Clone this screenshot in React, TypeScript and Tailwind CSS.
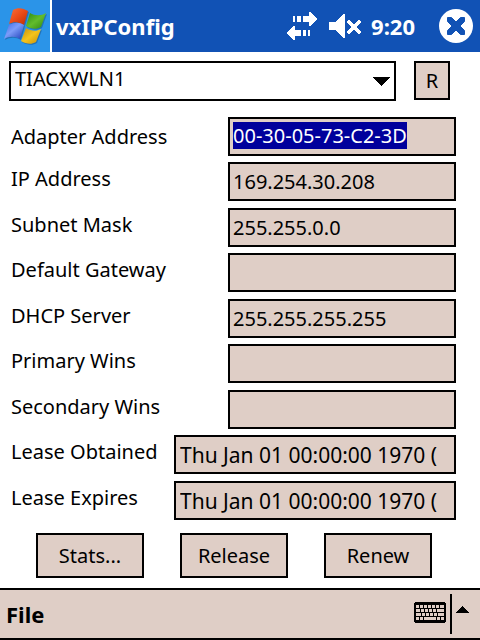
import { useEffect, useRef } from 'react';

interface Field {
  id: string;
  label: string;
  value: string;
  wide?: boolean;
}

const FIELDS: Field[] = [
  { id: 'adapter', label: 'Adapter Address', value: '00-30-05-73-C2-3D' },
  { id: 'ip', label: 'IP Address', value: '169.254.30.208' },
  { id: 'mask', label: 'Subnet Mask', value: '255.255.0.0' },
  { id: 'gateway', label: 'Default Gateway', value: '' },
  { id: 'dhcp', label: 'DHCP Server', value: '255.255.255.255' },
  { id: 'wins1', label: 'Primary Wins', value: '' },
  { id: 'wins2', label: 'Secondary Wins', value: '' },
  {
    id: 'obtained',
    label: 'Lease Obtained',
    value: 'Thu Jan 01 00:00:00 1970 (',
    wide: true,
  },
  {
    id: 'expires',
    label: 'Lease Expires',
    value: 'Thu Jan 01 00:00:00 1970 (',
    wide: true,
  },
];

// [x, y, width] of every key, all are 3px high
const KEYS = [
  [2, 3, 3], [6, 3, 3], [10, 3, 3], [14, 3, 3], [18, 3, 3], [22, 3, 3], [26, 3, 4],
  [2, 7, 4], [7, 7, 3], [11, 7, 3], [15, 7, 3], [19, 7, 3], [23, 7, 7],
  [2, 11, 5], [8, 11, 3], [12, 11, 3], [16, 11, 3], [20, 11, 3], [24, 11, 6],
  [2, 15, 3], [6, 15, 3], [10, 15, 12], [23, 15, 3], [27, 15, 3],
];

function StartLogo() {
  return (
    <svg width="50" height="52" viewBox="0 0 50 52">
      <defs>
        <linearGradient id="red" x1="0" y1="0" x2="1" y2="1">
          <stop offset="0" stopColor="#f8703c" />
          <stop offset="0.5" stopColor="#ea4a16" />
          <stop offset="1" stopColor="#b82c08" />
        </linearGradient>
        <linearGradient id="green" x1="0" y1="0" x2="1" y2="1">
          <stop offset="0" stopColor="#2c8a14" />
          <stop offset="0.5" stopColor="#62bc2c" />
          <stop offset="1" stopColor="#2c8410" />
        </linearGradient>
        <linearGradient id="blue" x1="0" y1="0" x2="1" y2="1">
          <stop offset="0" stopColor="#3e66e4" />
          <stop offset="0.45" stopColor="#7c9cf8" />
          <stop offset="1" stopColor="#1c3cb8" />
        </linearGradient>
        <linearGradient id="yellow" x1="0" y1="0" x2="1" y2="1">
          <stop offset="0" stopColor="#c08c10" />
          <stop offset="0.5" stopColor="#f4c41c" />
          <stop offset="1" stopColor="#c48c08" />
        </linearGradient>
      </defs>
      <g fill="#1c5c98" opacity="0.6" transform="translate(1 1)">
        <path d="M13 10C18 7 23 8 28 11L24 25C19 22 14 21 9 24Z" />
        <path d="M30 13C35 16 41 16 46 13L41 27C36 30 31 29 26 26Z" />
        <path d="M9 25C14 22 19 22 24 25L20 39C15 36 9 36 4 39Z" />
        <path d="M26 28C31 31 36 32 41 29L36 42C31 45 26 44 21 41Z" />
      </g>
      <path fill="url(#red)" d="M13 10C18 7 23 8 28 11L24 25C19 22 14 21 9 24Z" />
      <path fill="url(#green)" d="M30 13C35 16 41 16 46 13L41 27C36 30 31 29 26 26Z" />
      <path fill="url(#blue)" d="M9 25C14 22 19 22 24 25L20 39C15 36 9 36 4 39Z" />
      <path fill="url(#yellow)" d="M26 28C31 31 36 32 41 29L36 42C31 45 26 44 21 41Z" />
    </svg>
  );
}

function ConnectionIcon() {
  return (
    <svg width="30" height="28" viewBox="0 0 30 28" fill="#fff" shapeRendering="crispEdges">
      <path d="M6 4h2v6H6zM10 4h4v6h-4zM16 4h6V0h2l6 7-6 7h-2v-4h-6z" />
      <path d="M8 14H6l-6 7 6 7h2v-4h6v-6H8zM16 18h3v6h-3zM21 18h2v6h-2z" />
    </svg>
  );
}

function MutedIcon() {
  return (
    <svg width="32" height="24" viewBox="0 0 32 24" fill="#fff" shapeRendering="crispEdges">
      <path d="M0 8h7L14 0h2v24h-2L7 16H0z" />
      <path d="M20 8l10 10M30 8L20 18" stroke="#fff" strokeWidth="4" strokeLinecap="round" />
    </svg>
  );
}

function CloseIcon() {
  return (
    <svg width="34" height="34" viewBox="0 0 34 34">
      <circle cx="17" cy="17" r="17" fill="#fff" />
      <path
        d="M8.500 8.500h4l4.500 4.500 4.500-4.500h4v4l-4.500 4.500 4.500 4.500v4h-4l-4.500-4.500-4.500 4.500h-4v-4l4.500-4.500-4.500-4.500z"
        fill="#1152b5"
        stroke="#1152b5"
      />
    </svg>
  );
}

function KeyboardIcon() {
  return (
    <svg width="32" height="21" viewBox="0 0 32 21" shapeRendering="crispEdges">
      <path d="M1 0h30v1h1v19h-1v1H1v-1H0V1h1z" />
      {KEYS.map(([x, y, w]) => (
        <rect key={`${x}-${y}`} x={x} y={y} width={w} height="3" fill="#dfcec6" />
      ))}
    </svg>
  );
}

export default function App() {
  const firstField = useRef<HTMLInputElement>(null);

  useEffect(() => {
    firstField.current?.focus();
    firstField.current?.select();
  }, []);

  return (
    <div className="flex min-h-screen flex-col bg-white font-['Noto_Sans',sans-serif] text-xl text-black">
      <header className="flex h-[52px] items-center bg-[#1152b5] text-[22px] text-white">
        <button
          aria-label="Start"
          className="h-full shrink-0 border-r-2 border-white bg-[#2b94e8]"
        >
          <StartLogo />
        </button>
        <h1 className="flex-1 pl-1 font-bold">vxIPConfig</h1>
        <div className="flex items-center">
          <button aria-label="Connection" className="mr-3">
            <ConnectionIcon />
          </button>
          <button aria-label="Volume" className="mr-2.5">
            <MutedIcon />
          </button>
          <time className="mr-6 font-bold">9:20</time>
          <button aria-label="Close" className="mr-[7px]">
            <CloseIcon />
          </button>
        </div>
      </header>

      <main className="flex-1 pt-[9px]">
        <div className="flex gap-[18px] pr-[30px] pl-[9px]">
          <div className="relative flex-1">
            <select
              aria-label="Adapter"
              className="block h-10 w-full appearance-none border-2 border-black bg-white pb-1 pl-1 outline-none"
            >
              <option>TIACXWLN1</option>
            </select>
            <svg
              width="17"
              height="9"
              viewBox="0 0 17 9"
              shapeRendering="crispEdges"
              className="pointer-events-none absolute top-4 right-1.5"
            >
              <path d="M0 0h17L9 9H8z" />
            </svg>
          </div>
          <button className="h-[39px] w-9 border-2 border-black bg-[#dfcec6]">R</button>
        </div>

        <div className="mt-4 pr-6 pl-[11px]">
          {FIELDS.map(({ id, label, value, wide }, i) => (
            <div
              key={id}
              className="flex h-[39px] items-center justify-between odd:mb-1.5 even:mb-[7px]"
            >
              <label htmlFor={id} className={i === 0 ? '' : 'pb-1.5'}>
                {label}
              </label>
              <input
                id={id}
                ref={i === 0 ? firstField : undefined}
                readOnly
                defaultValue={value}
                className={`h-full rounded-none border-2 border-black bg-[#dfcec6] leading-[25px] outline-none selection:bg-[#00009c] selection:text-white ${
                  wide ? 'w-[282px] px-1 text-[21px]' : 'w-[228px] px-[3px]'
                } ${i === 0 ? 'pb-0.5' : ''}`}
              />
            </div>
          ))}
        </div>

        <div className="mt-[13px] flex justify-between pr-12 pb-2.5 pl-9">
          <button className="h-[45px] w-[108px] border-2 border-black bg-[#dfcec6]">Stats...</button>
          <button className="h-[45px] w-[108px] border-2 border-black bg-[#dfcec6]">Release</button>
          <button className="h-[45px] w-[108px] border-2 border-black bg-[#dfcec6]">Renew</button>
        </div>
      </main>

      <footer className="flex h-[52px] items-center border-y-2 border-black bg-[#dfcec6]">
        <button className="pl-1.5 text-[22px] font-bold">File</button>
        <button aria-label="Keyboard" className="mr-1 ml-auto flex h-10 items-start pt-2">
          <KeyboardIcon />
        </button>
        <button
          aria-label="Input methods"
          className="flex h-10 w-[30px] items-start border-l-2 border-black pt-3 pl-1"
        >
          <svg width="13" height="7" viewBox="0 0 13 7" shapeRendering="crispEdges">
            <path d="M6 0h1l6 7H0z" />
          </svg>
        </button>
      </footer>
    </div>
  );
}
